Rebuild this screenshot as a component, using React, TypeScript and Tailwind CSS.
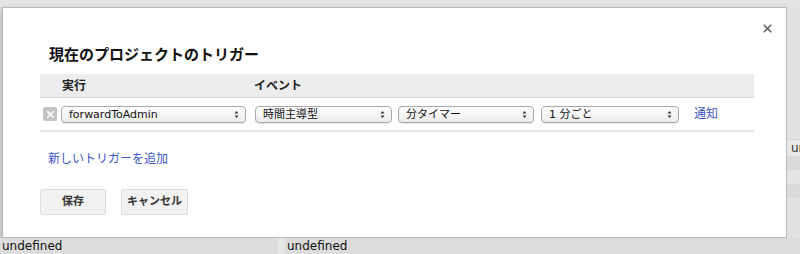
import { X } from "lucide-react";

const font = { fontFamily: '"DejaVu Sans", "Noto Sans CJK JP", sans-serif' };

function Select({ value, width }: { value: string; width: string }) {
  return (
    <div
      className={`${width} h-[17px] flex items-center justify-between pl-[7px] pr-[6px] rounded-[4px] border border-[#a8a8a8] bg-gradient-to-b from-white to-[#ececec] shadow-[0_1px_0_rgba(0,0,0,0.08)]`}
    >
      <span className="text-[11px] leading-none text-[#111] whitespace-nowrap">{value}</span>
      <svg width="5" height="9" viewBox="0 0 5 9" className="text-[#333]">
        <path d="M0.5 3.5 L2.5 1 L4.5 3.5 Z" fill="currentColor" />
        <path d="M0.5 5.5 L2.5 8 L4.5 5.5 Z" fill="currentColor" />
      </svg>
    </div>
  );
}

export default function App() {
  return (
    <div className="w-[800px] h-[254px] overflow-hidden bg-[#e4e4e4] flex flex-col" style={font}>
      <div className="flex pt-[7px]">
        {/* strip of the page behind on the left */}
        <div className="w-[2px] h-[231px] shrink-0 bg-[#dcdcdc]" />

        {/* dialog */}
        <div className="w-[785px] h-[231px] shrink-0 bg-white border border-[#b9b9b9] shadow-[0_3px_6px_rgba(0,0,0,0.25)] flex flex-col pl-[37px] pr-[32px]">
          <div className="flex justify-end pt-[14px] -mr-[20px] h-[30px]">
            <X className="w-[13px] h-[13px] text-[#666]" strokeWidth={3.2} />
          </div>
          <h2 className="text-[15px] font-bold text-[#111] leading-none mt-[10px] ml-[9px]">
            現在のプロジェクトのトリガー
          </h2>

          <div className="mt-[11px] h-[24px] bg-[#ececec] border-b border-[#d6d6d6] flex items-center text-[12px] font-bold text-[#222]">
            <span className="w-[214px] pl-[22px]">実行</span>
            <span>イベント</span>
          </div>

          <div className="h-[34px] flex items-center border-b-2 border-[#e4e4e4] whitespace-nowrap">
            <div className="w-[14px] h-[14px] ml-[3px] shrink-0 rounded-[2px] bg-[#c4c4c4] flex items-center justify-center">
              <X className="w-[11px] h-[11px] text-white" strokeWidth={3.5} />
            </div>
            <div className="ml-[4px] shrink-0">
              <Select value="forwardToAdmin" width="w-[185px]" />
            </div>
            <div className="ml-[9px] shrink-0">
              <Select value="時間主導型" width="w-[137px]" />
            </div>
            <div className="ml-[6px] shrink-0">
              <Select value="分タイマー" width="w-[136px]" />
            </div>
            <div className="ml-[7px] shrink-0">
              <Select value="1 分ごと" width="w-[138px]" />
            </div>
            <a className="ml-[15px] shrink-0 text-[12px] text-[#3b55c9] leading-none">通知</a>
          </div>

          <a className="mt-[21px] ml-[8px] text-[12px] text-[#3b55c9] leading-none">新しいトリガーを追加</a>

          <div className="flex gap-[15px] mt-[24px]">
            <button className="w-[66px] h-[26px] bg-[#f1f1f1] border border-[#dcdcdc] rounded-[2px] text-[11px] font-bold text-[#333]">
              保存
            </button>
            <button className="w-[67px] h-[26px] bg-[#f1f1f1] border border-[#dcdcdc] rounded-[2px] text-[11px] font-bold text-[#333]">
              キャンセル
            </button>
          </div>
        </div>

        {/* page behind on the right */}
        <div className="flex-1 min-w-0 h-[231px] flex flex-col bg-[#e2e2e2] overflow-hidden">
          <div className="h-[133px] border-b border-[#d4d4d4]" />
          <div className="h-[16px] bg-[#e8e8e8] text-[12px] leading-[16px] text-[#333] pl-[4px] whitespace-nowrap">
            undefined
          </div>
          <div className="h-[14px] bg-[#dadada]" />
          <div className="h-[14px] bg-[#e4e4e4]" />
          <div className="h-[14px] bg-[#dadada]" />
        </div>
      </div>

      {/* bottom row of the page behind */}
      <div className="flex h-[16px] bg-[#dcdcdc] text-[12px] leading-[16px] text-[#111]">
        <div className="w-[278px] pl-[2px]">undefined</div>
        <div className="w-[7px] bg-[#e6e6e6]" />
        <div className="flex-1 pl-[2px]">undefined</div>
      </div>
    </div>
  );
}
